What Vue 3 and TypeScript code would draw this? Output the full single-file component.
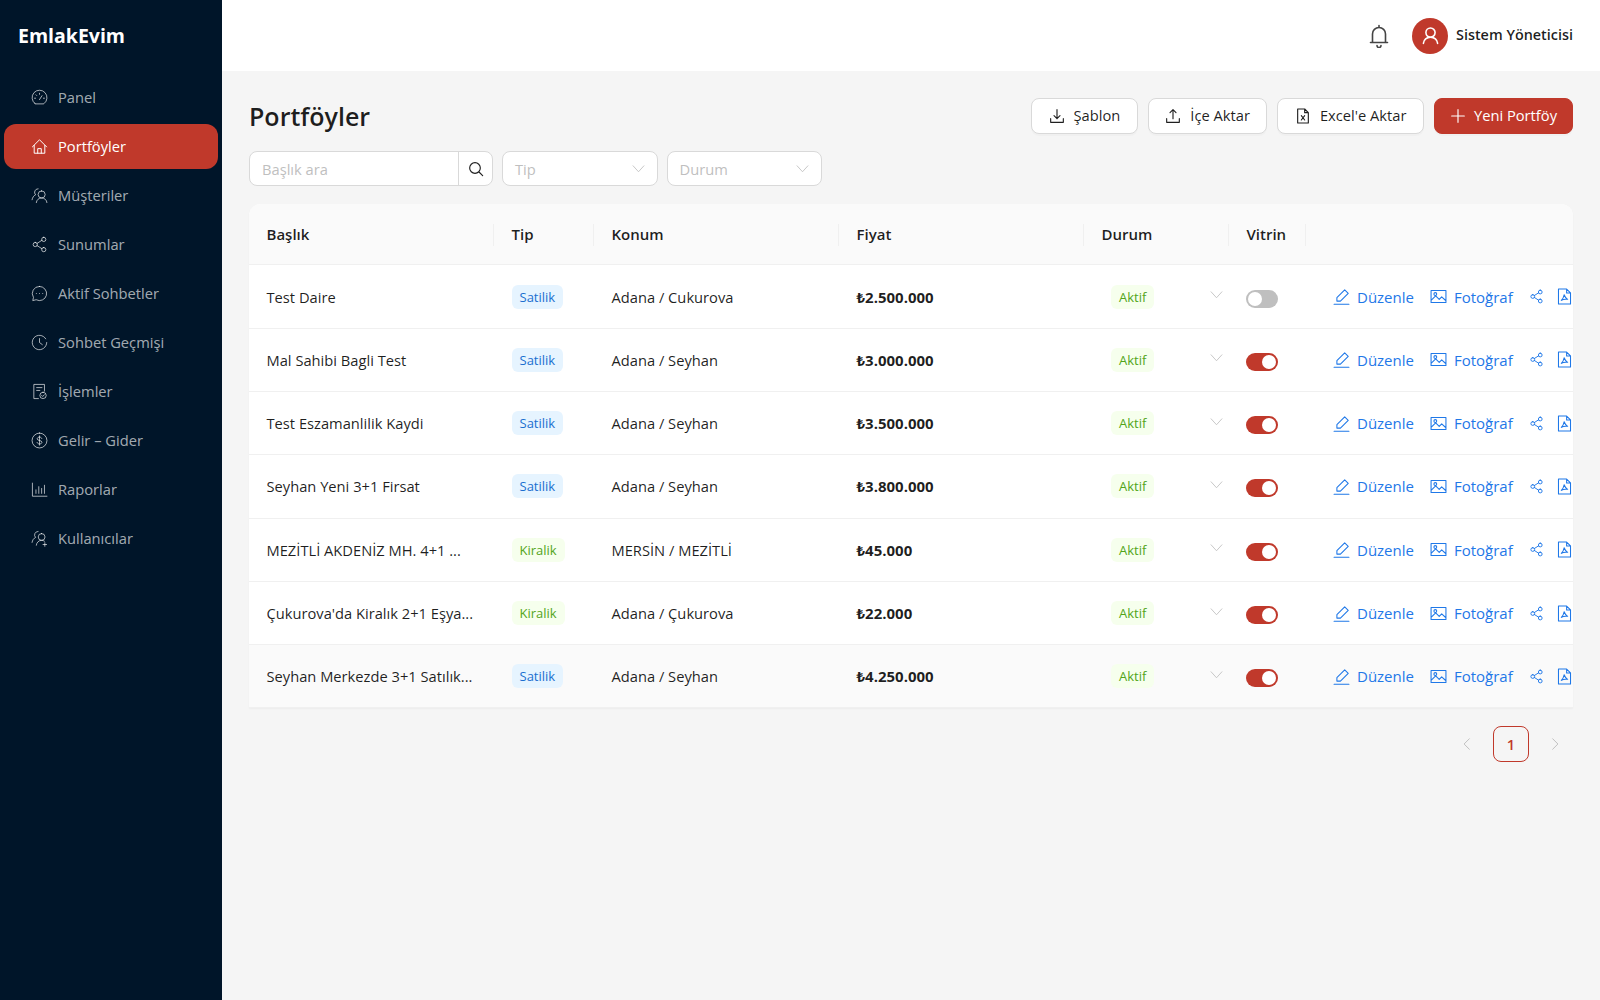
<script setup lang="ts">
const icons: Record<string, string> = {
  dashboard: 'M5.500 20.500a10.500 10.500 0 1 1 13 0 2 2 0 0 1-1.500.5H7a2 2 0 0 1-1.500-.5z M12 15l3.500-5.500 M5 13h1.500 M17.500 13H19 M12 6v1.500 M7 8.200l1 1',
  home: 'M2 12.500 12 2.500l10 10 M4.500 10.500V21.500h15V10.500 M9.500 21.500v-6.500h5v6.500',
  team: 'M10 2.500a5 5 0 0 0-3.500 8.500C3.800 12.200 2 14.800 1.500 18 M15 5.500a5 5 0 1 1 0 10 5 5 0 0 1 0-10z M7.500 22c.3-3.800 3.400-6.500 7.500-6.500s7.200 2.700 7.500 6.500',
  share: 'M6 9a3 3 0 1 1 0 6 3 3 0 0 1 0-6z M8.500 10.500l7-4.500 M8.500 13.500l7 4.500 M18 1.800a3 3 0 1 1 0 6 3 3 0 0 1 0-6z M18 16.200a3 3 0 1 1 0 6 3 3 0 0 1 0-6z',
  chat: 'M12 2a10 10 0 1 1-4.700 18.800L2.500 22l1-4.500A10 10 0 0 1 12 2z M7.500 12h.1 M12 12h.1 M16.500 12h.1',
  history: 'M20.800 6.800A10.200 10.200 0 1 0 22.200 12 M12 6.500V12l4 3',
  filedone: 'M19 11.500V2H4v20h6.500 M8 6.500h7.500 M8 10.500h4.500 M17 13a4.500 4.500 0 1 1 0 9 4.500 4.500 0 0 1 0-9z M15 17.500l1.500 1.500 2.500-2.500',
  dollar: 'M12 1.500a10.500 10.500 0 1 1 0 21 10.500 10.500 0 0 1 0-21z M15.200 9c-.5-1.200-1.700-1.800-3.200-1.800-1.800 0-3.200.9-3.200 2.400 0 3.400 6.600 1.500 6.600 4.900 0 1.500-1.500 2.400-3.400 2.400-1.600 0-2.900-.7-3.400-2 M12 5.500v13',
  chart: 'M2 3v18.500h20.500 M7 17.500v-5 M11 17.500V8 M15 17.500v-7 M19 17.500V6',
  useradd: 'M10 2a5 5 0 0 0-3.500 8.500C3.800 11.700 2 14.300 1.500 17.500 M15 5a4.800 4.800 0 1 1 0 9.600 4.800 4.800 0 0 1 0-9.600z M7.500 21.500c.3-3.800 3.400-6.900 7.500-6.900 1.500 0 2.800.4 4 1.200 M19.500 18v5 M17 20.500h5',
  bell: 'M12 1.500v2 M5.500 18.500V10a6.500 6.500 0 0 1 13 0v8.500 M3.500 18.500h17 M10 21.500a2 2 0 0 0 4 0',
  user: 'M12 2.500a5.800 5.800 0 1 1 0 11.600 5.800 5.800 0 0 1 0-11.600z M3 22c.4-4.500 4.200-7.900 9-7.900s8.600 3.400 9 7.900',
  download: 'M12 2.500V16 M7.500 11.500 12 16l4.500-4.500 M2.500 16v5.500h19V16',
  upload: 'M12 16V2.500 M7.500 7 12 2.500 16.500 7 M2.500 16v5.500h19V16',
  excel: 'M14.500 1.500H4v21h16V7z M14.500 1.500V7H20 M9.500 11.500l5 6.500 M14.500 11.500l-5 6.500',
  plus: 'M12 2.500v19 M2.500 12h19',
  search: 'M10.500 2.500a8 8 0 1 1 0 16 8 8 0 0 1 0-16z M16.500 16.500l5.500 5.500',
  edit: 'M1.500 23h21 M5.500 18.500v-5L16.500 2.500l5 5-11 11h-5z',
  picture: 'M1.500 3.500h21v17h-21z M1.500 17.500l6.500-6.500 5 5 3.500-3.500 6 5.500 M7.500 6.500a2 2 0 1 1 0 4 2 2 0 0 1 0-4z',
  pdf: 'M15 1.500H3.500v21h17V7z M15 1.500V7h5.500 M11.500 9.500c-.5 3-1.500 5.500-4 8 2.500-1.500 6-2 9-1.500-2.500-1.500-4-3.500-5-6.500z',
  chevron: 'M2 7l10 11L22 7',
}

const menu = [
  { label: 'Panel', icon: 'dashboard' },
  { label: 'Portföyler', icon: 'home', active: true },
  { label: 'Müşteriler', icon: 'team' },
  { label: 'Sunumlar', icon: 'share' },
  { label: 'Aktif Sohbetler', icon: 'chat' },
  { label: 'Sohbet Geçmişi', icon: 'history' },
  { label: 'İşlemler', icon: 'filedone' },
  { label: 'Gelir – Gider', icon: 'dollar' },
  { label: 'Raporlar', icon: 'chart' },
  { label: 'Kullanıcılar', icon: 'useradd' },
]

const rows = [
  { title: 'Test Daire', type: 'Satilik', place: 'Adana / Cukurova', price: '₺2.500.000', vitrin: false },
  { title: 'Mal Sahibi Bagli Test', type: 'Satilik', place: 'Adana / Seyhan', price: '₺3.000.000', vitrin: true },
  { title: 'Test Eszamanlilik Kaydi', type: 'Satilik', place: 'Adana / Seyhan', price: '₺3.500.000', vitrin: true },
  { title: 'Seyhan Yeni 3+1 Firsat', type: 'Satilik', place: 'Adana / Seyhan', price: '₺3.800.000', vitrin: true },
  { title: 'MEZİTLİ AKDENİZ MH. 4+1 ...', type: 'Kiralik', place: 'MERSİN / MEZİTLİ', price: '₺45.000', vitrin: true },
  { title: "Çukurova'da Kiralık 2+1 Eşya...", type: 'Kiralik', place: 'Adana / Çukurova', price: '₺22.000', vitrin: true },
  { title: 'Seyhan Merkezde 3+1 Satılık...', type: 'Satilik', place: 'Adana / Seyhan', price: '₺4.250.000', vitrin: true },
]
</script>

<template>
  <div class="layout">
    <aside class="sider">
      <div class="logo">EmlakEvim</div>
      <nav class="menu">
        <a v-for="item in menu" :key="item.label" class="menu-item" :class="{ active: item.active }">
          <svg class="ico menu-ico" viewBox="0 0 24 24"><path :d="icons[item.icon]" /></svg>
          <span>{{ item.label }}</span>
        </a>
      </nav>
    </aside>

    <div class="main">
      <header class="topbar">
        <svg class="ico bell" viewBox="0 0 24 24"><path :d="icons.bell" /></svg>
        <div class="avatar">
          <svg class="ico" viewBox="0 0 24 24"><path :d="icons.user" /></svg>
        </div>
        <span class="username">Sistem Yöneticisi</span>
      </header>

      <main class="content">
        <div class="page-head">
          <h1>Portföyler</h1>
          <div class="actions">
            <button class="btn">
              <svg class="ico" viewBox="0 0 24 24"><path :d="icons.download" /></svg>Şablon
            </button>
            <button class="btn">
              <svg class="ico" viewBox="0 0 24 24"><path :d="icons.upload" /></svg>İçe Aktar
            </button>
            <button class="btn">
              <svg class="ico" viewBox="0 0 24 24"><path :d="icons.excel" /></svg>Excel'e Aktar
            </button>
            <button class="btn primary">
              <svg class="ico" viewBox="0 0 24 24"><path :d="icons.plus" /></svg>Yeni Portföy
            </button>
          </div>
        </div>

        <div class="filters">
          <div class="search">
            <input type="text" placeholder="Başlık ara" />
            <span class="search-btn">
              <svg class="ico" viewBox="0 0 24 24"><path :d="icons.search" /></svg>
            </span>
          </div>
          <div class="select">
            <span>Tip</span>
            <svg class="ico chev" viewBox="0 0 24 24"><path :d="icons.chevron" /></svg>
          </div>
          <div class="select">
            <span>Durum</span>
            <svg class="ico chev" viewBox="0 0 24 24"><path :d="icons.chevron" /></svg>
          </div>
        </div>

        <div class="table-card">
          <table>
            <colgroup>
              <col style="width: 245px" />
              <col style="width: 100px" />
              <col style="width: 245px" />
              <col style="width: 245px" />
              <col style="width: 145px" />
              <col style="width: 77px" />
              <col />
            </colgroup>
            <thead>
              <tr>
                <th>Başlık</th>
                <th>Tip</th>
                <th>Konum</th>
                <th>Fiyat</th>
                <th>Durum</th>
                <th>Vitrin</th>
                <th class="no-sep"></th>
              </tr>
            </thead>
            <tbody>
              <tr v-for="(row, i) in rows" :key="row.title" :class="{ hovered: i === rows.length - 1 }">
                <td>{{ row.title }}</td>
                <td>
                  <span class="tag" :class="row.type === 'Satilik' ? 'blue' : 'green'">{{ row.type }}</span>
                </td>
                <td>{{ row.place }}</td>
                <td class="price">{{ row.price }}</td>
                <td>
                  <div class="status">
                    <span class="tag green">Aktif</span>
                    <svg class="ico chev" viewBox="0 0 24 24"><path :d="icons.chevron" /></svg>
                  </div>
                </td>
                <td>
                  <span class="switch" :class="{ on: row.vitrin }"><i></i></span>
                </td>
                <td class="row-actions">
                  <div class="links">
                    <a class="link">
                      <svg class="ico" viewBox="0 0 24 24"><path :d="icons.edit" /></svg>Düzenle
                    </a>
                    <a class="link">
                      <svg class="ico" viewBox="0 0 24 24"><path :d="icons.picture" /></svg>Fotoğraf
                    </a>
                    <a class="link">
                      <svg class="ico small" viewBox="0 0 24 24"><path :d="icons.share" /></svg>
                    </a>
                    <a class="link pdf">
                      <svg class="ico" viewBox="0 0 24 24"><path :d="icons.pdf" /></svg>
                    </a>
                  </div>
                </td>
              </tr>
            </tbody>
          </table>
        </div>

        <div class="pagination">
          <svg class="ico page-arrow" viewBox="0 0 24 24"><path d="M16 3 7 12l9 9" /></svg>
          <span class="page">1</span>
          <svg class="ico page-arrow" viewBox="0 0 24 24"><path d="M8 3l9 9-9 9" /></svg>
        </div>
      </main>
    </div>
  </div>
</template>

<style>
html,
body {
  margin: 0;
  background: #f5f5f5;
}
</style>

<style scoped>
.layout {
  display: flex;
  min-height: 1000px;
  font-family: "Open Sans", "Noto Sans", sans-serif;
  font-size: 14.7px;
  color: rgba(0, 0, 0, 0.88);
}

.ico {
  width: 16px;
  height: 16px;
  flex: none;
  fill: none;
  stroke: currentColor;
  stroke-width: 1.7;
  stroke-linecap: round;
  stroke-linejoin: round;
}

/* sidebar */
.sider {
  width: 222px;
  flex: none;
  background: #001529;
}

.logo {
  height: 71px;
  padding-left: 18px;
  display: flex;
  align-items: center;
  color: #fff;
  font-size: 19.5px;
  font-weight: 700;
}

.menu {
  display: flex;
  flex-direction: column;
  gap: 4px;
  padding: 4px 4px 0;
}

.menu-item {
  height: 45px;
  box-sizing: border-box;
  padding: 0 0 2px 27px;
  display: flex;
  align-items: center;
  gap: 11px;
  border-radius: 12px;
  color: rgba(255, 255, 255, 0.65);
}

.menu-item.active {
  background: #c0392b;
  color: #fff;
}

.menu-ico {
  width: 17px;
  height: 17px;
  margin: 2px -0.5px 0;
  stroke-width: 1.4;
}

/* top bar */
.main {
  flex: 1;
  min-width: 0;
  display: flex;
  flex-direction: column;
}

.topbar {
  height: 71px;
  flex: none;
  display: flex;
  align-items: center;
  justify-content: flex-end;
  padding-right: 27px;
  background: #fff;
}

.bell {
  width: 24px;
  height: 24px;
  color: #444;
  margin-right: 21px;
  stroke-width: 1.6;
}

.avatar {
  width: 36px;
  height: 36px;
  margin-right: 8px;
  border-radius: 50%;
  background: #c0392b;
  color: #fff;
  display: flex;
  align-items: center;
  justify-content: center;
}

.avatar .ico {
  width: 19px;
  height: 19px;
  stroke-width: 2;
}

.username {
  font-size: 14.4px;
  font-weight: 600;
  position: relative;
  top: -1px;
}

/* page */
.content {
  padding: 27px 27px 0;
}

.page-head {
  display: flex;
  align-items: center;
  justify-content: space-between;
  height: 36px;
}

h1 {
  margin: 0;
  font-size: 25px;
  font-weight: 600;
}

.actions {
  display: flex;
  gap: 10px;
}

.btn {
  height: 36px;
  padding: 0 16.5px 2px;
  display: flex;
  align-items: center;
  gap: 9px;
  border: 1px solid #d9d9d9;
  border-radius: 8px;
  background: #fff;
  box-shadow: 0 2px 0 rgba(0, 0, 0, 0.02);
  color: rgba(0, 0, 0, 0.88);
  font: inherit;
}

.btn .ico {
  margin-top: 2px;
}

.btn.primary {
  padding: 0 15px 2px;
  gap: 8px;
  background: #c0392b;
  border-color: #c0392b;
  color: #fff;
}

.filters {
  display: flex;
  gap: 9px;
  margin-top: 17px;
}

.search {
  width: 244px;
  height: 35px;
  box-sizing: border-box;
  display: flex;
  border: 1px solid #d9d9d9;
  border-radius: 8px;
  background: #fff;
}

.search input {
  flex: 1;
  min-width: 0;
  border: none;
  outline: none;
  background: none;
  padding: 0 12px;
  font: inherit;
}

.search input::placeholder,
.select span {
  color: #bfbfbf;
}

.search-btn {
  width: 33px;
  flex: none;
  display: flex;
  align-items: center;
  justify-content: center;
  border-left: 1px solid #d9d9d9;
}

.select {
  width: 155.5px;
  height: 35px;
  box-sizing: border-box;
  display: flex;
  align-items: center;
  justify-content: space-between;
  padding: 0 12px;
  border: 1px solid #d9d9d9;
  border-radius: 8px;
  background: #fff;
}

.chev {
  width: 13px;
  height: 13px;
  color: #bfbfbf;
  stroke-width: 1.6;
}

/* table */
.table-card {
  margin-top: 18px;
  overflow: hidden;
  border-radius: 12px 12px 0 0;
  background: #fff;
  box-shadow: 0 1px 2px rgba(0, 0, 0, 0.04);
}

table {
  width: 1340px;
  table-layout: fixed;
  border-collapse: collapse;
}

th {
  position: relative;
  height: 60.4px;
  padding: 0 17.5px;
  background: #fafafa;
  border-bottom: 1px solid #f0f0f0;
  text-align: left;
  font-size: 15px;
  font-weight: 600;
}

th::after {
  content: "";
  position: absolute;
  right: 0;
  top: 20px;
  height: 22px;
  width: 1px;
  background: #f0f0f0;
}

th.no-sep::after {
  display: none;
}

td {
  height: 62.3px;
  padding: 0 17.5px;
  border-bottom: 1px solid #f0f0f0;
  white-space: nowrap;
}

tr.hovered td {
  background: #fafafa;
}

.price {
  font-size: 15px;
  font-weight: 700;
}

.tag {
  display: inline-block;
  padding: 0 8px;
  height: 24px;
  line-height: 24px;
  border-radius: 6px;
  font-size: 13px;
}

.tag.blue {
  background: #e6f4ff;
  color: #1a6fd0;
}

.tag.green {
  background: #f6ffed;
  color: #52a51a;
}

.status {
  display: flex;
  align-items: center;
  justify-content: space-between;
  padding: 0 0 0 9.5px;
  margin-right: -11px;
}

.status .chev {
  margin-top: -4px;
}

.switch {
  display: block;
  width: 32px;
  height: 18px;
  margin-left: -0.5px;
  border-radius: 9px;
  background: #bfbfbf;
  position: relative;
  top: 2px;
}

.switch i {
  position: absolute;
  top: 2px;
  left: 2px;
  width: 14px;
  height: 14px;
  border-radius: 50%;
  background: #fff;
}

.switch.on {
  background: #c0392b;
}

.switch.on i {
  left: 16px;
}

.row-actions {
  padding-left: 27px;
}

.links {
  display: flex;
  align-items: center;
  gap: 16px;
}

.link {
  display: flex;
  align-items: center;
  gap: 7px;
  color: #1f78e8;
  font-size: 15px;
}

.link .ico {
  width: 17px;
  height: 17px;
  stroke-width: 1.5;
}

.link .ico.small {
  width: 15px;
  height: 15px;
}

.link.pdf {
  margin-left: -4px;
}

.pagination {
  display: flex;
  align-items: center;
  justify-content: flex-end;
  gap: 19px;
  margin-top: 18px;
  padding-right: 11px;
}

.page {
  width: 36px;
  height: 36px;
  box-sizing: border-box;
  display: flex;
  align-items: center;
  justify-content: center;
  border: 1px solid #c0392b;
  border-radius: 8px;
  color: #c0392b;
  font-weight: 600;
}

.page-arrow {
  width: 14px;
  height: 14px;
  color: #bfbfbf;
}
</style>
